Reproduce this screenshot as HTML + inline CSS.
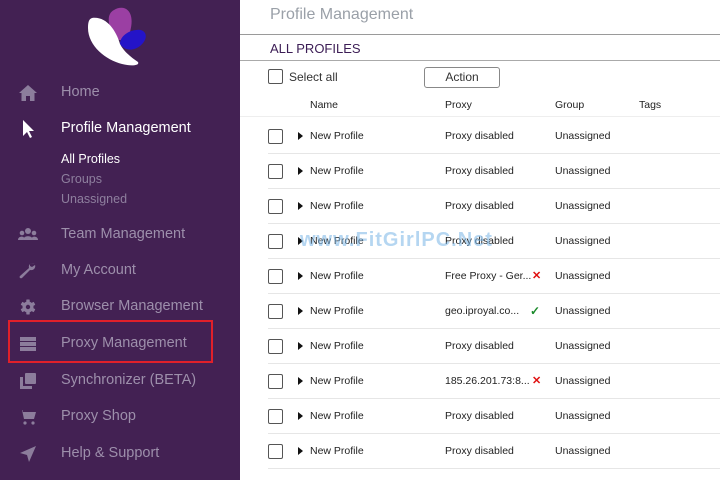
<!DOCTYPE html>
<html><head><meta charset="utf-8"><style>
*{margin:0;padding:0;box-sizing:border-box}
body{width:720px;height:480px;overflow:hidden;font-family:"Liberation Sans",Arial,sans-serif;background:#fff;position:relative}
#sb{position:absolute;left:0;top:0;width:240px;height:480px;background:#432153}
.nav{position:absolute;left:61px;font-size:14.5px;color:#9d8fab;white-space:nowrap}
.ic{position:absolute;left:18px;width:20px;height:20px}
.sub{position:absolute;left:61px;font-size:12.5px;color:#8e7f9e}
.t{position:absolute;white-space:nowrap;color:#222;font-size:10.5px}
.cb{position:absolute;left:268px;width:15px;height:15px;border:1.5px solid #555;border-radius:2px}
.line{position:absolute;left:268px;right:0;height:1px;background:#e6e6e6}
.tri{position:absolute;left:298px;width:0;height:0;border-top:4px solid transparent;border-bottom:4px solid transparent;border-left:5px solid #111}
</style></head><body>
<div id="sb">
<svg style="position:absolute;left:84px;top:6px" width="66" height="60" viewBox="0 0 66 60">
<path d="M30 4 C40 -2 52 4 46 26 C42 36 34 36 30 30 C24 20 22 8 30 4Z" fill="#9b3fa3"/>
<path d="M52 24 C62 22 66 32 56 40 C48 46 40 44 36 38 C36 30 44 25 52 24Z" fill="#2414c8"/>
<path d="M8 12 C22 10 32 24 36 38 C40 46 48 52 54 56 C56 60 46 60 38 58 C22 54 4 40 4 22 C4 16 5 13 8 12Z" fill="#fff"/>
</svg>
<svg class="ic" style="top:83px" viewBox="0 0 20 20"><path d="M10 2 L1 10 L3.5 10 L3.5 18 L8 18 L8 13 L12 13 L12 18 L16.5 18 L16.5 10 L19 10 Z" fill="#8c7d9c"/></svg>
<div class="nav" style="top:84px">Home</div>
<svg class="ic" style="top:119px" viewBox="0 0 20 20"><path d="M5 1 L5 17 L9 13 L12 19 L14 18 L11 12 L16 12 Z" fill="#fff"/></svg>
<div class="nav" style="top:120px;color:#fff">Profile Management</div>
<div class="sub" style="top:152px;color:#fff">All Profiles</div>
<div class="sub" style="top:172px">Groups</div>
<div class="sub" style="top:192px">Unassigned</div>
<svg class="ic" style="top:225px" viewBox="0 0 20 20"><g fill="#8c7d9c"><circle cx="10" cy="6" r="3"/><circle cx="4" cy="8" r="2.3"/><circle cx="16" cy="8" r="2.3"/><path d="M5 15 C5 10 15 10 15 15Z"/><path d="M0 15 C0 11 6 11 6 13 L5 15Z"/><path d="M20 15 C20 11 14 11 14 13 L15 15Z"/></g></svg>
<div class="nav" style="top:226px">Team Management</div>
<svg class="ic" style="top:261px" viewBox="0 0 20 20"><path d="M17 3 C14 1 10 3 11 7 L2 15 C1 16 2 18 4 17 L12 9 C16 10 18 6 17 4 L14 6 L12 5 L12 3 L15 2Z" fill="#8c7d9c"/></svg>
<div class="nav" style="top:262px">My Account</div>
<svg class="ic" style="top:297px" viewBox="0 0 20 20"><g fill="#8c7d9c"><circle cx="10" cy="10" r="5.5"/><rect x="8.3" y="2.5" width="3.4" height="15" rx="0.5"/><rect x="8.3" y="2.5" width="3.4" height="15" rx="0.5" transform="rotate(60 10 10)"/><rect x="8.3" y="2.5" width="3.4" height="15" rx="0.5" transform="rotate(120 10 10)"/></g><circle cx="10" cy="10" r="2.2" fill="#432153"/></svg>
<div class="nav" style="top:298px">Browser Management</div>
<div style="position:absolute;left:8px;top:320px;width:205px;height:43px;border:2.5px solid #e0202a"></div>
<svg class="ic" style="top:334px" viewBox="0 0 20 20"><g fill="#8c7d9c"><rect x="2" y="3" width="16" height="4"/><rect x="2" y="8" width="16" height="4"/><rect x="2" y="13" width="16" height="4"/></g></svg>
<div class="nav" style="top:335px">Proxy Management</div>
<svg class="ic" style="top:371px" viewBox="0 0 20 20"><g fill="#8c7d9c"><rect x="7" y="2" width="11" height="11" rx="1"/><path d="M2 6 L5 6 L5 15 L14 15 L14 18 L2 18Z"/></g></svg>
<div class="nav" style="top:372px">Synchronizer (BETA)</div>
<svg class="ic" style="top:407px" viewBox="0 0 20 20"><g fill="#8c7d9c"><path d="M1 3 L4 3 L6 12 L16 12 L18 5 L5 5 L4.5 3Z"/><circle cx="7" cy="16" r="1.6"/><circle cx="15" cy="16" r="1.6"/></g></svg>
<div class="nav" style="top:408px">Proxy Shop</div>
<svg class="ic" style="top:444px" viewBox="0 0 20 20"><path d="M18 2 L2 9 L9 11 L11 18 Z" fill="#8c7d9c"/></svg>
<div class="nav" style="top:445px">Help &amp; Support</div>
</div>
<div class="t" style="left:270px;top:6px;font-size:16px;color:#9aa0a8">Profile Management</div>
<div style="position:absolute;left:240px;right:0;top:34px;height:1px;background:#9a9a9a"></div>
<div class="t" style="left:270px;top:41px;font-size:13px;color:#3c1d55">ALL PROFILES</div>
<div style="position:absolute;left:240px;right:0;top:60px;height:1px;background:#aaa"></div>
<div class="cb" style="top:69px"></div>
<div class="t" style="left:289px;top:70px;font-size:12px;color:#333">Select all</div>
<div style="position:absolute;left:424px;top:67px;width:76px;height:21px;border:1px solid #888;border-radius:3px;font-size:12px;text-align:center;line-height:19px;color:#333">Action</div>
<div class="t" style="left:310px;top:99px">Name</div>
<div class="t" style="left:445px;top:99px">Proxy</div>
<div class="t" style="left:555px;top:99px">Group</div>
<div class="t" style="left:639px;top:99px">Tags</div>
<div class="line" style="top:116px;left:240px;background:#eee"></div>
<div id="rows"></div>
<script>
var px=["Proxy disabled","Proxy disabled","Proxy disabled","Proxy disabled","Free Proxy - Ger...","geo.iproyal.co...","Proxy disabled","185.26.201.73:8...","Proxy disabled","Proxy disabled"];
var st=["","","","","x","v","","x","",""];
var h="";
for(var i=0;i<10;i++){var c=136+35*i;
h+='<div class="cb" style="top:'+(c-7)+'px"></div><div class="tri" style="top:'+(c-4)+'px"></div>'+
'<div class="t" style="left:310px;top:'+(c-6)+'px">New Profile</div>'+
'<div class="t" style="left:445px;top:'+(c-6)+'px">'+px[i]+'</div>'+
'<div class="t" style="left:555px;top:'+(c-6)+'px">Unassigned</div>'+
'<div class="line" style="top:'+(c+17)+'px"></div>';
if(st[i]=="x")h+='<div class="t" style="left:532px;top:'+(c-7)+'px;color:#e01010;font-weight:bold;font-size:11px">✕</div>';
if(st[i]=="v")h+='<div class="t" style="left:530px;top:'+(c-7)+'px;color:#1a8a2a;font-weight:bold;font-size:12px">✓</div>';}
document.getElementById("rows").innerHTML=h;
</script>
<div class="t" style="left:300px;top:229px;font-size:20px;font-weight:bold;color:rgba(120,180,230,0.55);letter-spacing:1px">www.FitGirlPC.Net</div>
</body></html>
